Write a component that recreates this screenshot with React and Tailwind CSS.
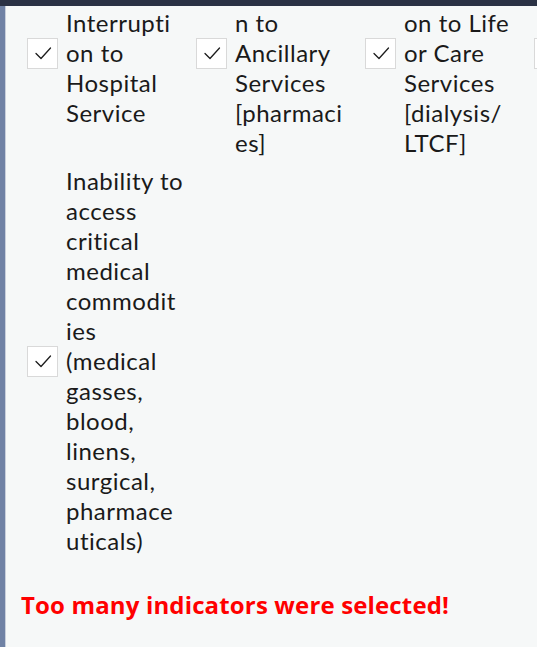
const items = [
  { lines: ["Significant", "Interrupti", "on to", "Hospital", "Service"] },
  { lines: ["Significant", "Interruptio", "n to", "Ancillary", "Services", "[pharmaci", "es]"] },
  { lines: ["Significant", "Interrupti", "on to Life", "or Care", "Services", "[dialysis/", "LTCF]"] },
  { lines: ["Significant", "Interrupti", "on to", "Utilities", "[power/", "water]"] },
  {
    lines: [
      "Inability to",
      "access",
      "critical",
      "medical",
      "commodit",
      "ies",
      "(medical",
      "gasses,",
      "blood,",
      "linens,",
      "surgical,",
      "pharmace",
      "uticals)",
    ],
  },
];

function Check() {
  return (
    <div className="flex h-[31px] w-[31px] shrink-0 items-center justify-center border border-[#d9d9d9] bg-white">
      <svg width="20" height="20" viewBox="0 0 20 20" fill="none">
        <path d="M3 10.5 L8 15.5 L17.5 5" stroke="#1c1c1c" strokeWidth="1.3" strokeLinecap="round" strokeLinejoin="round" />
      </svg>
    </div>
  );
}

function Item({ lines }) {
  return (
    <div className="flex items-center gap-[8px] pl-[6px]">
      <Check />
      <div className="w-[121px] shrink-0 text-[24px] leading-[30px] tracking-[0.5px] text-[#1a1a1a]">
        {lines.map((l, i) => (
          <div key={i} className="whitespace-nowrap">{l}</div>
        ))}
      </div>
    </div>
  );
}

export default function App() {
  return (
    <div
      className="flex h-[647px] w-[537px] flex-col overflow-hidden bg-[#f6f8f8]"
      style={{ fontFamily: "Lato, 'Noto Sans', sans-serif" }}
    >
      <div className="relative z-10 h-[6px] shrink-0 bg-[#2b3245]" />
      <div className="flex min-h-0 flex-1">
        <div className="w-[5px] shrink-0 bg-[#7082a5]" />
        <div className="w-[1px] shrink-0 bg-[#c9d0dc]" />
        <div className="min-w-0 flex-1 overflow-hidden">
          <div className="-mt-[58px] pl-[15px]">
            <div className="grid grid-cols-[repeat(4,169px)] items-center gap-y-[8px]">
              {items.map((it, i) => (
                <Item key={i} lines={it.lines} />
              ))}
            </div>
            <div
              className="mt-[34px] whitespace-nowrap text-[24px] font-bold leading-[30px] tracking-[0.15px] text-[#ff0000]"
              style={{ fontFamily: "'Open Sans', sans-serif" }}
            >
              Too many indicators were selected!
            </div>
          </div>
        </div>
      </div>
    </div>
  );
}
